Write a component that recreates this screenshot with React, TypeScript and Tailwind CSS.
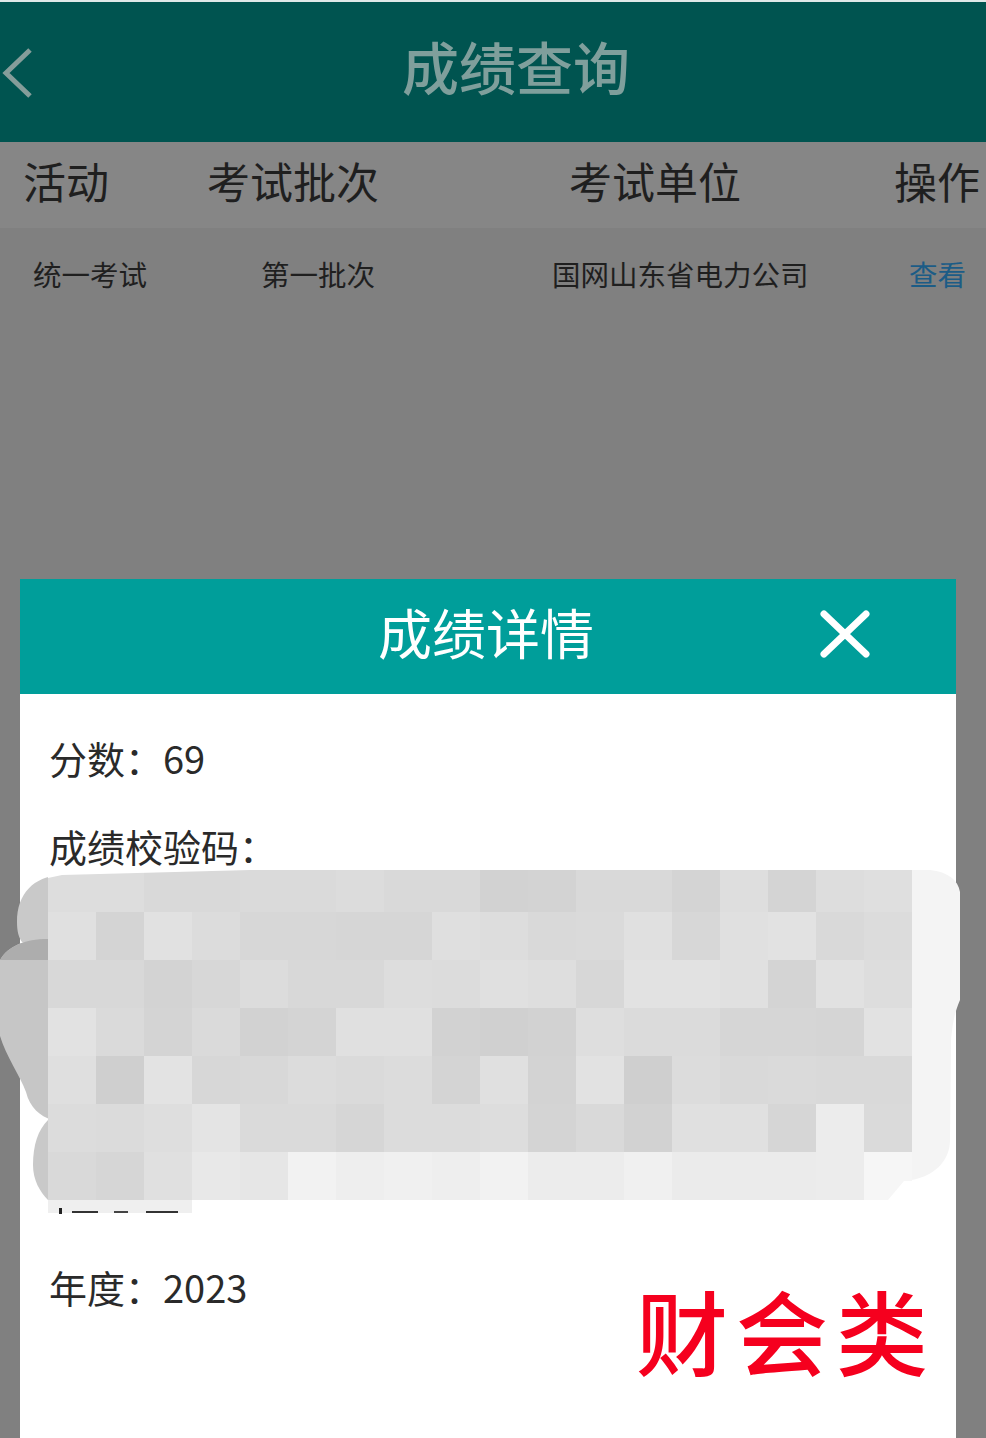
const mosaic = [
  ['#dddddd', '#dddddd', '#d9d9d9', '#d9d9d9', '#dadada', '#dadada', '#dcdcdc', '#d9d9d9', '#d9d9d9', '#d2d2d2', '#d3d3d3', '#d9d9d9', '#d9d9d9', '#d4d4d4', '#dedede', '#d4d4d4', '#dddddd', '#dfdfdf'],
  ['#e0e0e0', '#d4d4d4', '#e1e1e1', '#dcdcdc', '#d7d7d7', '#d7d7d7', '#d6d6d6', '#d6d6d6', '#dfdfdf', '#dddddd', '#d9d9d9', '#dadada', '#e0e0e0', '#d7d7d7', '#e0e0e0', '#e2e2e2', '#d9d9d9', '#dcdcdc'],
  ['#d8d8d8', '#d8d8d8', '#d3d3d3', '#d7d7d7', '#dcdcdc', '#d8d8d8', '#d8d8d8', '#dddddd', '#dcdcdc', '#e0e0e0', '#dedede', '#d7d7d7', '#e2e2e2', '#e2e2e2', '#e0e0e0', '#d4d4d4', '#e1e1e1', '#dddddd'],
  ['#e2e2e2', '#dadada', '#d4d4d4', '#dadada', '#d2d2d2', '#d4d4d4', '#e0e0e0', '#e0e0e0', '#d2d2d2', '#d0d0d0', '#d2d2d2', '#dedede', '#dbdbdb', '#dbdbdb', '#d6d6d6', '#d6d6d6', '#d5d5d5', '#e2e2e2'],
  ['#dfdfdf', '#cfcfcf', '#e3e3e3', '#d7d7d7', '#d8d8d8', '#dcdcdc', '#dadada', '#dcdcdc', '#d4d4d4', '#e0e0e0', '#d3d3d3', '#e2e2e2', '#cfcfcf', '#dcdcdc', '#d9d9d9', '#dadada', '#d9d9d9', '#d9d9d9'],
  ['#dcdcdc', '#dbdbdb', '#dedede', '#e4e4e4', '#dadada', '#dadada', '#d6d6d6', '#dcdcdc', '#dcdcdc', '#dddddd', '#d4d4d4', '#d9d9d9', '#d2d2d2', '#e0e0e0', '#e0e0e0', '#d6d6d6', '#ececec', '#dadada'],
  ['#d9d9d9', '#d6d6d6', '#e0e0e0', '#e8e8e8', '#e6e6e6', '#f2f2f2', '#eeeeee', '#f0f0f0', '#eeeeee', '#f2f2f2', '#ececec', '#ececec', '#f0f0f0', '#ebebeb', '#ebebeb', '#ebebeb', '#ececec', '#f6f6f6'],
];

const cjk = "font-['Noto_Sans_CJK_SC','Noto_Sans',sans-serif]";

function ScoreLine({ label, value }: { label: string; value?: string }) {
  return (
    <p className="text-[38px] leading-[52px] text-[#2a2a2a] font-normal">
      {label}
      {value}
    </p>
  );
}

function Redaction() {
  return (
    <div className="absolute left-0 top-0 w-[986px] h-[1438px]">
      <svg className="absolute left-0 top-0" width="986" height="1438" viewBox="0 0 986 1438" fill="none">
        <path d="M60 875 C34 877 17 893 17 922 C17 932 19 938 22 942 L48 950 L48 1120 C38 1130 33 1145 33 1165 C33 1180 40 1192 48 1200 L60 1200 L60 875 Z" fill="#c9c9c9" />
        <path d="M48 939 C25 939 8 946 0 960 L0 1036 C6 1056 20 1076 26 1092 C30 1108 40 1116 52 1120 L60 1120 L60 939 Z" fill="#c6c6c6" />
        <path d="M48 939 C25 939 8 946 0 960 L48 960 Z" fill="#adadad" />
        <path d="M905 870 L930 870 C948 872 958 880 960 892 L960 1000 C955 1012 953 1020 951 1040 L950 1140 C950 1160 935 1178 905 1181 Z" fill="#f4f4f4" />
        <rect x="48" y="1200" width="144" height="13" fill="#efefef" />
        <rect x="59" y="1208" width="3" height="6" fill="#222222" />
        <rect x="72" y="1211" width="26" height="2" fill="#333333" />
        <rect x="114" y="1211" width="14" height="2" fill="#444444" />
        <rect x="146" y="1211" width="32" height="2" fill="#333333" />
      </svg>
      <div className="absolute left-[48px] top-[870px] w-[864px] grid grid-cols-[repeat(18,48px)] grid-rows-[42px_repeat(6,48px)]">
        {mosaic.flat().map((color, i) => (
          <div key={i} style={{ backgroundColor: color }} />
        ))}
      </div>
      {/* white wedges where the smear edge cuts the mosaic */}
      <svg className="absolute left-0 top-0" width="986" height="1438" viewBox="0 0 986 1438" fill="none">
        <path d="M48 869 L250 869 L250 870 L62 875 L48 878 Z" fill="#ffffff" />
        <path d="M912 1181 L904 1181 L888 1200 L912 1200 Z" fill="#ffffff" />
      </svg>
    </div>
  );
}

export default function App() {
  return (
    <div className={`relative w-[986px] h-[1438px] overflow-hidden bg-[#808080] ${cjk}`}>
      <div className="h-[2px] bg-[#dfe9e8]" />
      <header className="relative h-[140px] bg-[#005450] flex items-center justify-center">
        <svg className="absolute left-0 top-[46px]" width="40" height="50" viewBox="0 0 40 50" fill="none">
          <path d="M30 2 L6 25 L30 48" stroke="#859d9a" strokeWidth="5" />
        </svg>
        <h1 className="pl-[46px] pb-[14px] text-[57px] leading-none text-[#7f9f9c] font-medium">成绩查询</h1>
      </header>

      <div className="h-[86px] pb-[10px] bg-[#868686] grid grid-cols-[184px_362px_325px_1fr] items-center pl-[23px] text-[43px] text-[#1f1f1f] font-normal">
        <span>活动</span>
        <span>考试批次</span>
        <span>考试单位</span>
        <span className="whitespace-nowrap">操作</span>
      </div>
      <div className="h-[94px] pb-[2px] grid grid-cols-[228px_291px_357px_1fr] items-center pl-[33px] text-[28.5px] text-[#1f1f1f] font-normal">
        <span>统一考试</span>
        <span>第一批次</span>
        <span>国网山东省电力公司</span>
        <span className="text-[#1c5c86]">查看</span>
      </div>

      <div className="absolute left-[20px] top-[579px] w-[936px] h-[859px] bg-white">
        <div className="relative h-[115px] bg-[#009e9a] flex items-center justify-center">
          <h2 className="pr-[4px] pb-[10px] text-[54px] leading-none text-white font-normal">成绩详情</h2>
          <svg className="absolute left-[797px] top-[29px]" width="56" height="52" viewBox="0 0 56 52" fill="none">
            <path d="M7 6 L49 46 M49 6 L7 46" stroke="#ffffff" strokeWidth="7" strokeLinecap="round" />
          </svg>
        </div>
        <div className="px-[29px] pt-[38px] flex flex-col gap-[36px]">
          <ScoreLine label="分数：" value="69" />
          <ScoreLine label="成绩校验码：" />
          <div className="h-[317px]" />
          <ScoreLine label="年度：" value="2023" />
        </div>
      </div>

      <Redaction />

      <div className="absolute left-[636px] top-[1264px] text-[92px] leading-[130px] tracking-[8px] text-[#f5001e] font-medium">
        财会类
      </div>
    </div>
  );
}
